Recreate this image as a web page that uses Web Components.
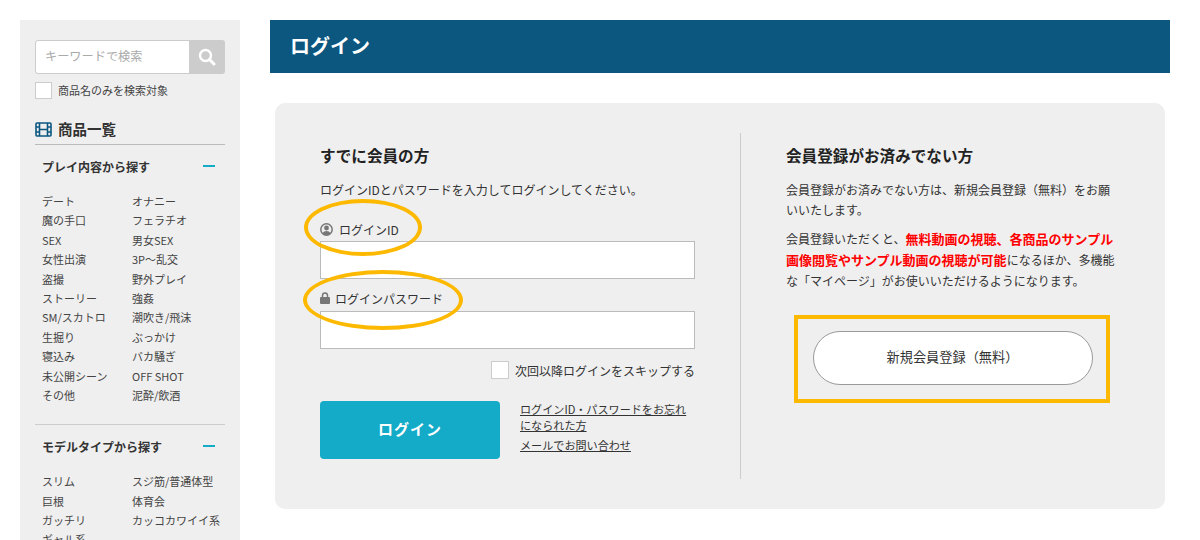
<!DOCTYPE html>
<html lang="ja">
<head>
<meta charset="utf-8">
<title>ログイン</title>
<style>
  html, body { margin: 0; height: 540px; overflow: hidden; background: #fff; }
  body {
    font-family: "Noto Sans CJK JP", "Noto Sans", sans-serif;
    font-size: 12px;
    color: #333;
  }
</style>
</head>
<body>
<login-page></login-page>

<script>
const searchTemplate = document.createElement('template')
searchTemplate.innerHTML = `<style>
  :host { display: block; }
  .box { display: flex; height: 34px; box-sizing: border-box; border-radius: 3px; overflow: hidden; }
  .field {
    flex: 1;
    display: flex;
    align-items: center;
    padding: 0 0 2px 9px;
    background: #fff;
    border: 1px solid #ccc;
    border-right: 0;
    border-radius: 3px 0 0 3px;
    color: #aaa;
    font-size: 12.2px;
  }
  .btn { width: 36px; background: #ccc; display: flex; align-items: center; justify-content: center; }
  .only { display: flex; align-items: center; gap: 6px; margin-top: 8px; font-size: 11px; color: #444; }
  .only span:last-child { margin-top: -2px; }
  .check { width: 15px; height: 15px; background: #fff; border: 1px solid #ccc; }
</style>
<div class="box">
  <div class="field">キーワードで検索</div>
  <div class="btn">
    <svg width="18" height="18" viewBox="0 0 18 18" fill="none" stroke="#fff">
      <circle cx="7.5" cy="7.5" r="5.5" stroke-width="2.4"/>
      <path d="M11.5 11.5L16 16" stroke-width="3" stroke-linecap="round"/>
    </svg>
  </div>
</div>
<div class="only"><span class="check"></span><span>商品名のみを検索対象</span></div>
`

class SearchBox extends HTMLElement {
  constructor() {
    super()
    this._shadowRoot = this.attachShadow({ mode: 'open' })
    this._shadowRoot.appendChild(searchTemplate.content.cloneNode(true))
  }
}
customElements.define('search-box', SearchBox)

const navGroupTemplate = document.createElement('template')
navGroupTemplate.innerHTML = `<style>
  :host { display: block; padding: 0 0 19px; border-bottom: 1px solid #ccc; }
  :host([last]) { border-bottom: 0; }
  .head { display: flex; justify-content: space-between; align-items: center; height: 42px; padding: 0 10px 0 7px; font-size: 12px; font-weight: 700; color: #333; }
  .minus { width: 12px; height: 2px; background: #14abc9; }
  .list {
    display: grid;
    grid-template-columns: 90px 1fr;
    grid-auto-rows: 19.4px;
    margin-top: 5px;
    padding-left: 7px;
    font-size: 11px;
    line-height: 19.4px;
    color: #444;
    white-space: nowrap;
  }
</style>
<div class="head"><span class="title"></span><span class="minus"></span></div>
<div class="list"></div>
`

class NavGroup extends HTMLElement {
  constructor() {
    super()
    this._shadowRoot = this.attachShadow({ mode: 'open' })
    this._shadowRoot.appendChild(navGroupTemplate.content.cloneNode(true))
    this._shadowRoot.querySelector('.title').textContent = this.getAttribute('title')
    const list = this._shadowRoot.querySelector('.list')
    this.getAttribute('items').split(',').forEach(item => {
      const cell = document.createElement('span')
      cell.textContent = item
      list.appendChild(cell)
    })
  }
}
customElements.define('nav-group', NavGroup)

const sideTemplate = document.createElement('template')
sideTemplate.innerHTML = `<style>
  :host { display: block; width: 220px; height: 520px; box-sizing: border-box; padding: 20px 15px 0; background: #efefef; overflow: hidden; }
  .heading {
    display: flex;
    align-items: center;
    gap: 6px;
    height: 30px;
    box-sizing: content-box;
    margin-top: 15px;
    border-bottom: 1px solid #bbb;
    font-size: 14.5px;
    font-weight: 700;
    color: #333;
  }
  .heading span { margin-top: -2px; }
</style>
<search-box></search-box>
<div class="heading">
  <svg width="17" height="15" viewBox="0 0 17 15" fill="none" stroke="#0c5780" stroke-width="1.6">
    <rect x="1" y="1" width="15" height="13" rx="1"/>
    <path d="M4.5 1V14M12.5 1V14M1 5H4.5M1 10H4.5M12.5 5H16M12.5 10H16M4.5 7.5H12.5"/>
  </svg>
  <span>商品一覧</span>
</div>
<nav-group title="プレイ内容から探す" items="デート,オナニー,魔の手口,フェラチオ,SEX,男女SEX,女性出演,3P～乱交,盗撮,野外プレイ,ストーリー,強姦,SM/スカトロ,潮吹き/飛沫,生掘り,ぶっかけ,寝込み,バカ騒ぎ,未公開シーン,OFF SHOT,その他,泥酔/飲酒"></nav-group>
<nav-group last title="モデルタイプから探す" items="スリム,スジ筋/普通体型,巨根,体育会,ガッチリ,カッコカワイイ系,ギャル系"></nav-group>
`

class SideNav extends HTMLElement {
  constructor() {
    super()
    this._shadowRoot = this.attachShadow({ mode: 'open' })
    this._shadowRoot.appendChild(sideTemplate.content.cloneNode(true))
  }
}
customElements.define('side-nav', SideNav)

const loginTemplate = document.createElement('template')
loginTemplate.innerHTML = `<style>
  :host { display: block; position: relative; width: 375px; }
  h2 { margin: 0; height: 20px; line-height: 20px; font-size: 15.6px; font-weight: 700; color: #222; }
  p { margin: 15px 0 0; height: 20px; line-height: 20px; font-size: 12px; color: #333; }
  label { display: flex; align-items: center; height: 20px; font-size: 12px; color: #333; }
  .id { gap: 6px; margin-top: 19px; }
  .pw { gap: 5px; margin-top: 9px; }
  .input { height: 38px; box-sizing: border-box; background: #fff; border: 1px solid #bbb; margin-top: 2px; }
  .pw + .input { margin-top: 3px; }
  .skip { display: flex; justify-content: flex-end; align-items: center; gap: 6px; margin-top: 12px; height: 18px; font-size: 12px; color: #333; }
  .check { width: 16px; height: 16px; background: #fff; border: 1px solid #ccc; }
  .actions { display: flex; gap: 20px; margin-top: 22px; }
  .submit {
    width: 180px;
    height: 58px;
    box-sizing: border-box;
    padding-bottom: 4px;
    display: flex;
    align-items: center;
    justify-content: center;
    background: #14abc9;
    border-radius: 4px;
    color: #fff;
    font-size: 15px;
    font-weight: 700;
    letter-spacing: 1px;
  }
  .links { width: 175px; font-size: 11.1px; line-height: 16px; }
  a { color: #333; text-decoration: underline; display: block; }
  a + a { margin-top: 4px; }
  .ring { position: absolute; box-sizing: border-box; border: 4px solid #fdb900; border-radius: 50%; }
  .ring.one { left: -16px; top: 54px; width: 118px; height: 57px; }
  .ring.two { left: -17px; top: 125px; width: 160px; height: 60px; }
</style>
<h2>すでに会員の方</h2>
<p>ログインIDとパスワードを入力してログインしてください。</p>
<label class="id">
  <svg width="13" height="13" viewBox="0 0 13 13"><circle cx="6.5" cy="6.5" r="5.7" fill="none" stroke="#777" stroke-width="1.5"/><circle cx="6.5" cy="5" r="2.4" fill="#777"/><path d="M2.4 10.6C3.2 8.6 4.8 7.9 6.5 7.9S9.8 8.6 10.6 10.6C8.2 12.6 4.8 12.6 2.4 10.6Z" fill="#777"/></svg>
  ログインID
</label>
<div class="input"></div>
<label class="pw">
  <svg width="10" height="12" viewBox="0 0 10 12"><path d="M2.5 5.5V3.6C2.5 2 3.6 1 5 1S7.5 2 7.5 3.6V5.5" fill="none" stroke="#777" stroke-width="1.5"/><rect y="5" width="10" height="7" rx="1" fill="#777"/></svg>
  ログインパスワード
</label>
<div class="input"></div>
<div class="skip"><span class="check"></span>次回以降ログインをスキップする</div>
<div class="actions">
  <div class="submit">ログイン</div>
  <div class="links">
    <a>ログインID・パスワードをお忘れになられた方</a>
    <a>メールでお問い合わせ</a>
  </div>
</div>
<span class="ring one"></span>
<span class="ring two"></span>
`

class LoginForm extends HTMLElement {
  constructor() {
    super()
    this._shadowRoot = this.attachShadow({ mode: 'open' })
    this._shadowRoot.appendChild(loginTemplate.content.cloneNode(true))
  }
}
customElements.define('login-form', LoginForm)

const registerTemplate = document.createElement('template')
registerTemplate.innerHTML = `<style>
  :host { display: block; width: 334px; }
  h2 { margin: 0; height: 20px; line-height: 20px; font-size: 15.6px; font-weight: 700; color: #222; }
  p { margin: 0; font-size: 12px; color: #333; }
  p.a { margin-top: 15px; line-height: 20px; }
  p.b { margin-top: 8px; line-height: 21px; }
  b { color: #f00; font-size: 13px; line-height: 20px; }
  .frame {
    width: 316px;
    height: 88px;
    box-sizing: border-box;
    margin: 24px 0 0 8px;
    padding-left: 1px;
    border: 4px solid #fdb900;
    display: flex;
    align-items: center;
    justify-content: center;
  }
  .btn {
    width: 280px;
    height: 54px;
    box-sizing: border-box;
    padding-bottom: 4px;
    margin-top: -2px;
    display: flex;
    align-items: center;
    justify-content: center;
    background: #fff;
    border: 1px solid #999;
    border-radius: 27px;
    color: #333;
    font-size: 13.2px;
  }
</style>
<h2>会員登録がお済みでない方</h2>
<p class="a">会員登録がお済みでない方は、新規会員登録（無料）をお願いいたします。</p>
<p class="b">会員登録いただくと、<b>無料動画の視聴、各商品のサンプル画像閲覧やサンプル動画の視聴が可能</b>になるほか、多機能な「マイページ」がお使いいただけるようになります。</p>
<div class="frame"><div class="btn">新規会員登録（無料）</div></div>
`

class RegisterPanel extends HTMLElement {
  constructor() {
    super()
    this._shadowRoot = this.attachShadow({ mode: 'open' })
    this._shadowRoot.appendChild(registerTemplate.content.cloneNode(true))
  }
}
customElements.define('register-panel', RegisterPanel)

const pageTemplate = document.createElement('template')
pageTemplate.innerHTML = `<style>
  :host { display: flex; gap: 30px; padding: 20px 30px 0 20px; width: 1200px; box-sizing: border-box; height: 540px; overflow: hidden; }
  main { width: 900px; }
  h1 {
    margin: 0;
    height: 53px;
    box-sizing: border-box;
    padding: 0 0 3px 20px;
    display: flex;
    align-items: center;
    background: #0c5780;
    color: #fff;
    font-size: 20px;
    font-weight: 700;
  }
  .card {
    display: flex;
    width: 890px;
    height: 406px;
    box-sizing: border-box;
    margin: 30px 0 0 5px;
    padding: 30px 0 30px 45px;
    background: #efefef;
    border-radius: 10px;
  }
  .rule { width: 1px; background: #ccc; margin: 0 45px 0 45px; }
  login-form, register-panel { margin-top: 12px; }
</style>
<side-nav></side-nav>
<main>
  <h1>ログイン</h1>
  <div class="card">
    <login-form></login-form>
    <div class="rule"></div>
    <register-panel></register-panel>
  </div>
</main>
`

class LoginPage extends HTMLElement {
  constructor() {
    super()
    this._shadowRoot = this.attachShadow({ mode: 'open' })
    this._shadowRoot.appendChild(pageTemplate.content.cloneNode(true))
  }
}
customElements.define('login-page', LoginPage)
</script>
</body>
</html>
